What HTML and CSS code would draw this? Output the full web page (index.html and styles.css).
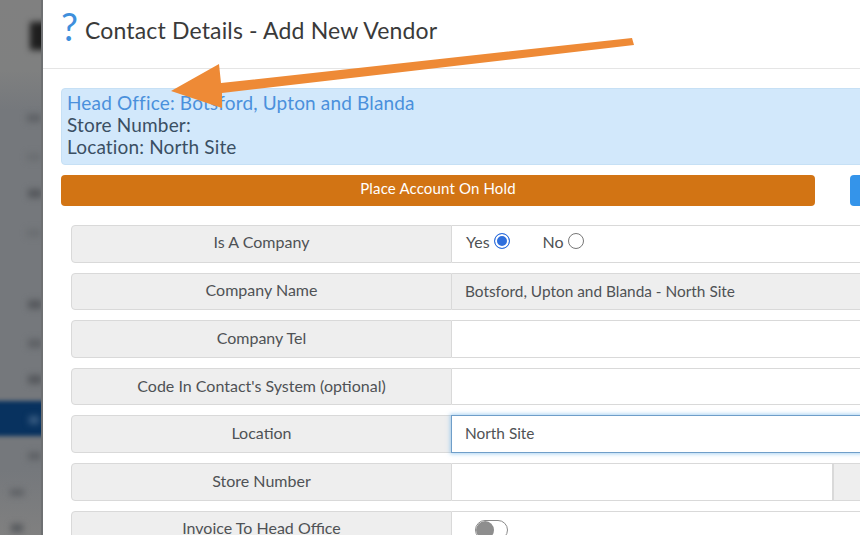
FILE: index.html
```html
<!DOCTYPE html>
<html lang="en">
<head>
<meta charset="utf-8">
<title>Contact Details - Add New Vendor</title>
<link rel="stylesheet" href="styles.css">
</head>
<body>
<div class="page">
  <aside class="backdrop" aria-hidden="true">
    <div class="side-inner">
      <span class="blob logo"></span>
      <span class="blob s1"></span>
      <span class="blob s2"></span>
      <span class="blob s3"></span>
      <span class="blob s4"></span>
      <span class="blob s5"></span>
      <span class="blob s6"></span>
      <span class="blob s7"></span>
      <span class="active"></span>
      <span class="blob s8"></span>
      <span class="blob s9"></span>
      <span class="blob s10"></span>
      <span class="blob s11"></span>
    </div>
  </aside>
  <main class="modal">
    <header class="modal-head">
      <span class="help">?</span>
      <h1>Contact Details - Add New Vendor</h1>
    </header>
    <div class="modal-body">
      <div class="alert">
        <a class="alert-link">Head Office: Botsford, Upton and Blanda</a>
        <div>Store Number:</div>
        <div>Location: North Site</div>
      </div>
      <div class="actions">
        <button class="btn btn-hold">Place Account On Hold</button>
        <button class="btn btn-blue"></button>
      </div>
      <form class="rows">
        <div class="row row-high">
          <div class="label">Is A Company</div>
          <div class="field radios">
            <span class="opt">Yes<i class="radio on"></i></span>
            <span class="opt">No<i class="radio"></i></span>
          </div>
        </div>
        <div class="row row-high">
          <div class="label">Company Name</div>
          <div class="field readonly">Botsford, Upton and Blanda - North Site</div>
        </div>
        <div class="row">
          <div class="label">Company Tel</div>
          <div class="field"></div>
        </div>
        <div class="row">
          <div class="label">Code In Contact's System (optional)</div>
          <div class="field"></div>
        </div>
        <div class="row">
          <div class="label">Location</div>
          <div class="field focus">North Site</div>
        </div>
        <div class="row">
          <div class="label">Store Number</div>
          <div class="field short"></div>
          <div class="addon"></div>
        </div>
        <div class="row row-last">
          <div class="label">Invoice To Head Office</div>
          <div class="field toggle-cell"><span class="toggle"><i></i></span></div>
        </div>
      </form>
    </div>
  </main>
  <svg class="arrow" viewBox="0 0 860 535" aria-hidden="true">
    <polygon fill="#ee8a36" points="171,91 219,64 221,83 632,38 634,45 222,93 222,108"/>
  </svg>
</div>
</body>
</html>
```
FILE: styles.css
```css
* { box-sizing: border-box; }
html, body { margin: 0; height: 100%; overflow: hidden; }
body {
  font-family: "Lato", "Liberation Sans", sans-serif;
  color: #3f4347;
  background: #fff;
}
.page { position: relative; display: flex; width: 860px; height: 535px; overflow: hidden; }

/* dimmed, blurred page behind the modal */
.backdrop {
  flex: 0 0 43px;
  height: 535px;
  background: linear-gradient(#808080 0, #7f8080 70px, #75787c 110px, #75787c 470px, #808080 535px);
  border-right: 2px solid #6e7072;
  overflow: hidden;
}
.side-inner { position: relative; width: 43px; height: 535px; overflow: hidden; }
.blob {
  position: absolute;
  display: block;
  background: #5f6266;
  filter: blur(3px);
}
.logo { left: 30px; top: 22px; width: 20px; height: 28px; background: #1e1e1e; filter: blur(3px); }
.s1 { left: 27px; top: 114px; width: 14px; height: 8px; }
.s2 { left: 27px; top: 153px; width: 14px; height: 8px; background: #6b6e72; }
.s3 { left: 28px; top: 189px; width: 14px; height: 9px; background: #56595d; }
.s4 { left: 27px; top: 229px; width: 14px; height: 8px; background: #6b6e72; }
.s5 { left: 28px; top: 300px; width: 14px; height: 9px; background: #56595d; }
.s6 { left: 28px; top: 339px; width: 14px; height: 9px; }
.s7 { left: 28px; top: 375px; width: 14px; height: 9px; background: #56595d; }
.active {
  position: absolute;
  left: -10px; top: 401px;
  width: 60px; height: 35px;
  background: #08325f;
  filter: blur(2px);
}
.s8 { left: 29px; top: 416px; width: 10px; height: 8px; background: #3a5d82; }
.s9 { left: 28px; top: 452px; width: 13px; height: 8px; }
.s10 { left: 10px; top: 489px; width: 14px; height: 7px; }
.s11 { left: 11px; top: 524px; width: 12px; height: 8px; background: #56595d; }

/* modal */
.modal { flex: 0 0 1000px; background: #fff; }
.modal-head {
  display: flex;
  align-items: center;
  height: 69px;
  padding: 0 0 9px 18px;
  border-bottom: 1px solid #e5e5e5;
}
.help { width: 24px; font-size: 38px; line-height: 1; color: #3f8fdc; position: relative; top: -4px; }
h1 { margin: 0; font-size: 23px; font-weight: 400; color: #3a3a3a; letter-spacing: .16px; }
.modal-body { padding: 19px 0 0 18px; }
.alert {
  height: 77px;
  padding: 3px 5px;
  background: #d2e8fb;
  border: 1px solid #c6e0f5;
  border-radius: 4px;
  font-size: 19px;
  line-height: 22px;
  letter-spacing: .16px;
  color: #3a4f63;
}
.alert-link { color: #4a90dc; display: block; }
.actions { display: flex; gap: 35px; margin-top: 10px; }
.btn { height: 31px; border: 0; border-radius: 4px; font: inherit; font-size: 15px; letter-spacing: .15px; color: #fff; padding: 0 0 5px; }
.btn-hold { flex: 0 0 754px; background: #d27414; }
.btn-blue { flex: 0 0 200px; background: #3494ea; }

.rows { display: grid; grid-auto-rows: 37.6px; row-gap: 10px; margin: 19px 0 0 10px; }
.row { display: flex; font-size: 16px; line-height: 33px; color: #4f5255; }
.row-high .label { line-height: 31px; }
.row-last { line-height: 31px; }
.label {
  flex: 0 0 381px;
  background: #eee;
  border: 1px solid #d9d9d9;
  border-radius: 4px 0 0 4px;
  text-align: center;
}
.field {
  flex: 1;
  background: #fff;
  border: 1px solid #d9d9d9;
  border-left-width: 0;
  padding-left: 13px;
  font-size: 15.4px;
  line-height: 35px;
}
.readonly { background: #eee; }
.focus {
  border: 1px solid #6f9ec9;
  margin-left: -1px;
  box-shadow: 0 0 4px 1px rgba(102,175,233,.55);
}
.short { flex: 0 0 381px; }
.addon { flex: 1; background: #eee; border: 1px solid #d9d9d9; }

.radios { display: flex; gap: 33px; align-items: center; padding-left: 14px; padding-bottom: 5px; font-size: 16px; }
.opt { display: inline-flex; align-items: center; }
.radio {
  display: block;
  width: 16px; height: 16px;
  margin: -1px 0 0 4px;
  background: #fff;
  border: 1px solid #777;
  border-radius: 50%;
}
.radio.on {
  border: 1px solid #2f6fdc;
  background: #2f6fdc;
  box-shadow: inset 0 0 0 2px #fff;
}
.toggle-cell { padding-left: 23px; }
.toggle {
  display: block;
  width: 33px; height: 20px;
  margin-top: 8px;
  border: 1px solid #8a8a8a;
  border-radius: 10px;
  background: #fff;
  overflow: hidden;
}
.toggle i { display: block; width: 18px; height: 18px; border-radius: 50%; background: #8e8e8e; }

.arrow { position: absolute; left: 0; top: 0; width: 860px; height: 535px; pointer-events: none; }
```
